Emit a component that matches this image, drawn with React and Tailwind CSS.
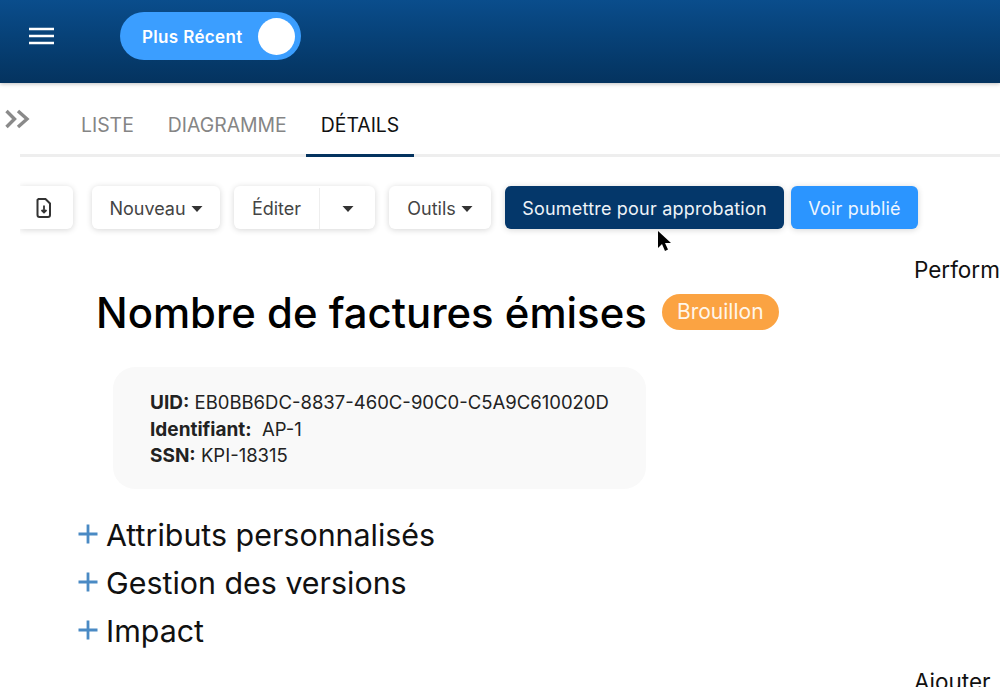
import React from 'react'

const Caret = () => (
  <svg width="12" height="6" viewBox="0 0 12 6" className="block">
    <path d="M0.5 0h11L6 6z" fill="#333" />
  </svg>
)

const ToolButton = ({ children, className = '' }) => (
  <button className={`h-[43px] bg-white rounded-[6px] shadow-[0_1px_6px_rgba(0,0,0,0.16)] flex items-center text-[#444] text-[18px] pt-[2px] ${className}`}>
    {children}
  </button>
)

const Section = ({ label }) => (
  <div className="flex items-center h-[48px]">
    <svg width="20" height="20" viewBox="0 0 20 20" className="mr-[8px] ml-[-1px] mt-[-2px]">
      <path d="M10 0.5v19M0.5 10h19" stroke="#4a8ac4" strokeWidth="2.8" />
    </svg>
    <span className="text-[30.4px] text-[#111] leading-none">{label}</span>
  </div>
)

const App = () => {
  return (
    <div className="w-[1000px] h-[687px] overflow-hidden bg-white flex flex-col font-['Inter','Liberation_Sans',sans-serif]">
      {/* Top bar */}
      <header className="h-[83px] shrink-0 flex items-center bg-gradient-to-b from-[#0a4d8c] to-[#04335f] pl-[29px] shadow-[0_1px_4px_rgba(0,0,0,0.25)] pb-[11px]">
        <svg width="25" height="18" viewBox="0 0 25 18">
          <path d="M0 2h25M0 9h25M0 16h25" stroke="#fff" strokeWidth="2.6" />
        </svg>
        <div className="ml-[66px] w-[181px] h-[48px] rounded-full bg-[#3b9eff] flex items-center justify-between pl-[22px] pr-[6px]">
          <span className="text-white font-semibold text-[17px] tracking-[0.35px] pt-[3px]">Plus Récent</span>
          <span className="w-[37px] h-[37px] rounded-full bg-white" />
        </div>
      </header>

      <div className="relative flex-1 min-h-0 pl-[20px]">
        <svg width="26" height="20" viewBox="0 0 26 20" className="absolute left-[5px] top-[26px]">
          <path d="M1.5 2l8 8-8 8M13 2l9 8-9 8" fill="none" stroke="#8a8a8a" strokeWidth="3.4" />
        </svg>

        {/* Tabs */}
        <nav className="mt-[17px] h-[57px] border-b-[3px] border-[#eeeeee] flex pl-[46px] text-[19.4px]">
          <span className="px-[15px] h-[57px] flex items-center pb-[5px] text-[#858585]">LISTE</span>
          <span className="px-[19px] h-[57px] flex items-center pb-[5px] text-[#858585]">DIAGRAMME</span>
          <span className="px-[15px] h-[57px] flex items-center pb-[2px] text-[#111] border-b-[3px] border-[#04335f]">DÉTAILS</span>
        </nav>

        {/* Toolbar */}
        <div className="flex items-center mt-[29px] text-[18px]">
          <ToolButton className="w-[53px] rounded-l-none justify-center pr-[5px] [clip-path:inset(-10px_-10px_-10px_0)]">
            <svg width="16" height="20" viewBox="0 0 16 20" fill="none" stroke="#333" strokeWidth="2" className="mt-[-2px]">
              <path d="M2.5 1h7l4.500 4.500V17a2 2 0 0 1-2 2H3.500a2 2 0 0 1-2-2V2z" />
              <path d="M8 7.500v7M5.500 12l2.500 2.500 2.500-2.500" strokeWidth="1.800" />
            </svg>
          </ToolButton>
          <ToolButton className="ml-[19px] w-[128px] justify-center gap-[5px]">
            Nouveau <Caret />
          </ToolButton>
          <ToolButton className="ml-[14px] w-[141px]">
            <span className="w-[86px] h-full flex items-center justify-center border-r border-[#eeeeee]">Éditer</span>
            <span className="flex-1 flex justify-center"><Caret /></span>
          </ToolButton>
          <ToolButton className="ml-[14px] w-[102px] justify-center gap-[5px]">
            Outils <Caret />
          </ToolButton>
          <div className="relative ml-[14px]">
            <button className="h-[43px] w-[279px] pt-[2px] bg-[#04376a] text-[#eef3f8] rounded-[6px] shadow-[0_1px_6px_rgba(0,0,0,0.16)] tracking-[0.2px]">
              Soumettre pour approbation
            </button>
            <svg width="16" height="24" viewBox="0 0 16 24" className="absolute left-[151px] top-[44px]">
              <path d="M2 1v17l4-4 3 7 3-1.500-3-6.500h6z" fill="#000" />
            </svg>
          </div>
          <button className="ml-[7px] h-[43px] w-[127px] pt-[2px] bg-[#2b95ff] text-[#eef6ff] rounded-[6px] shadow-[0_1px_6px_rgba(0,0,0,0.16)] tracking-[0.2px]">
            Voir publié
          </button>
        </div>

        <div className="flex">
          {/* Main column */}
          <main className="w-[894px] shrink-0 pl-[57px]">
            <div className="flex items-center mt-[59px] ml-[19px]">
              <h1 className="text-[41.85px] leading-[50px] text-black font-[450]">Nombre de factures émises</h1>
              <span className="ml-[15px] h-[36px] w-[117px] mt-[-2px] rounded-full bg-[#fba342] text-[#fff6ea] text-[21px] flex items-center justify-center">Brouillon</span>
            </div>
            <div className="mt-[29px] ml-[36px] w-[533px] h-[122px] rounded-[22px] bg-[#f9f9f9] pl-[37px] pt-[22px] text-[18.5px] leading-[26.500px] text-[#222]">
              <p><b className="text-[19px] leading-none">UID:</b> EB0BB6DC-8837-460C-90C0-C5A9C610020D</p>
              <p><b className="text-[19px] leading-none">Identifiant:</b>&nbsp; AP-1</p>
              <p><b className="text-[19px] leading-none">SSN:</b> KPI-18315</p>
            </div>
            <div className="mt-[22px] ml-[2px]">
              <Section label="Attributs personnalisés" />
              <Section label="Gestion des versions" />
              <Section label="Impact" />
            </div>
          </main>

          {/* Right column, runs off the window */}
          <aside className="flex-1 min-w-0 overflow-hidden whitespace-nowrap text-[22.500px] text-[#111]">
            <p className="mt-[24px]">Performance</p>
            <p className="mt-[378px]">Ajouter</p>
          </aside>
        </div>
      </div>
    </div>
  )
}

export default App
